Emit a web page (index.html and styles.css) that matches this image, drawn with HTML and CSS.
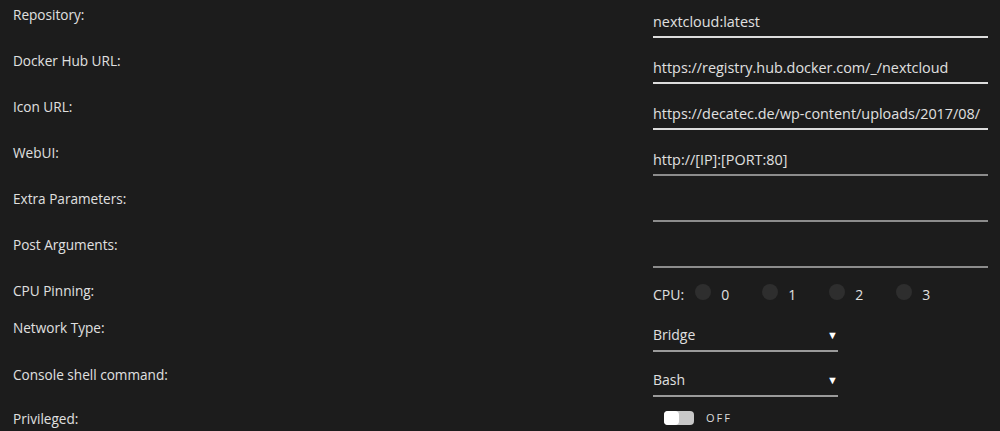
FILE: index.html
```html
<!DOCTYPE html>
<html lang="en">
<head>
    <meta charset="UTF-8">
    <title>Update Container</title>
    <link rel="stylesheet" href="styles.css">
</head>
<body>
    <div class="form">
        <div class="row">
            <div class="label">Repository:</div>
            <div class="field"><input class="text bright" type="text" value="nextcloud:latest"></div>
        </div>
        <div class="row">
            <div class="label">Docker Hub URL:</div>
            <div class="field"><input class="text bright" type="text" value="https://registry.hub.docker.com/_/nextcloud"></div>
        </div>
        <div class="row">
            <div class="label">Icon URL:</div>
            <div class="field"><input class="text bright" type="text" value="https://decatec.de/wp-content/uploads/2017/08/"></div>
        </div>
        <div class="row">
            <div class="label">WebUI:</div>
            <div class="field"><input class="text" type="text" value="http://[IP]:[PORT:80]"></div>
        </div>
        <div class="row">
            <div class="label">Extra Parameters:</div>
            <div class="field"><input class="text" type="text" value=""></div>
        </div>
        <div class="row">
            <div class="label">Post Arguments:</div>
            <div class="field"><input class="text" type="text" value=""></div>
        </div>
        <div class="row cpu-row">
            <div class="label">CPU Pinning:</div>
            <div class="field cpus">
                <span class="cpu-title">CPU:</span>
                <span class="cpu"><i class="dot"></i>0</span>
                <span class="cpu"><i class="dot"></i>1</span>
                <span class="cpu"><i class="dot"></i>2</span>
                <span class="cpu"><i class="dot"></i>3</span>
            </div>
        </div>
        <div class="row select-row">
            <div class="label">Network Type:</div>
            <div class="field"><div class="select"><span>Bridge</span><span class="arrow">&#9660;</span></div></div>
        </div>
        <div class="row select-row">
            <div class="label">Console shell command:</div>
            <div class="field"><div class="select"><span>Bash</span><span class="arrow">&#9660;</span></div></div>
        </div>
        <div class="row priv-row">
            <div class="label">Privileged:</div>
            <div class="field toggle-field">
                <span class="switch"><i class="knob"></i></span>
                <span class="switch-text">OFF</span>
            </div>
        </div>
    </div>
</body>
</html>
```

FILE: styles.css
```css
body {
    margin: 0;
    background-color: #1c1c1c;
    color: #e0e0e0;
    font-family: "Open Sans", Arial, sans-serif;
    font-size: 14px;
    overflow: hidden;
}
.form {
    width: 1000px;
}
.row {
    display: flex;
    height: 46px;
}
.label {
    width: 640px;
    padding-left: 13px;
    padding-top: 6px;
    font-size: 13.6px;
    line-height: 18px;
    box-sizing: border-box;
}
.field {
    flex: 1;
    padding-left: 13px;
}
.text {
    display: block;
    width: 335px;
    height: 30px;
    margin-top: 8px;
    padding: 4px 0 6px 0;
    box-sizing: border-box;
    background: transparent;
    border: none;
    border-bottom: 2px solid #8c8c8c;
    color: #e0e0e0;
    font-family: "Open Sans", Arial, sans-serif;
    font-size: 14.4px;
    line-height: 18px;
    outline: none;
}
.text.bright {
    border-bottom-color: #dcdcdc;
}
.cpu-row {
    height: 36px;
}
.cpus {
    display: flex;
    align-items: center;
    height: 18px;
    margin-top: 9px;
}
.cpu-title {
    margin-right: 11px;
}
.cpu {
    display: flex;
    align-items: center;
    width: 67px;
}
.dot {
    width: 16px;
    height: 16px;
    border-radius: 50%;
    background-color: #2e2e2e;
    margin-right: 10px;
    margin-top: -4px;
}
.select-row {
    height: 45px;
}
.select-row .label {
    padding-top: 7px;
}
.select-row + .select-row .label {
    padding-top: 9px;
}
.select {
    display: flex;
    justify-content: space-between;
    width: 185px;
    height: 32px;
    margin-top: 8px;
    padding-top: 6px;
    line-height: 18px;
    box-sizing: border-box;
    border-bottom: 2px solid #9a9a9a;
}
.arrow {
    font-size: 11px;
    color: #fff;
}
.priv-row .label {
    padding-top: 8px;
}
.toggle-field {
    display: flex;
    align-items: center;
    height: 14px;
    padding-left: 24px;
    margin-top: 9px;
}
.switch {
    position: relative;
    width: 30px;
    height: 14px;
    border-radius: 4px;
    background-color: #c8c8c8;
}
.knob {
    position: absolute;
    left: 0;
    top: 0;
    width: 15px;
    height: 14px;
    border-radius: 4px;
    background-color: #fff;
}
.switch-text {
    margin-left: 12px;
    font-size: 11px;
    line-height: 14px;
    letter-spacing: 2px;
    color: #dcdcdc;
}
```
